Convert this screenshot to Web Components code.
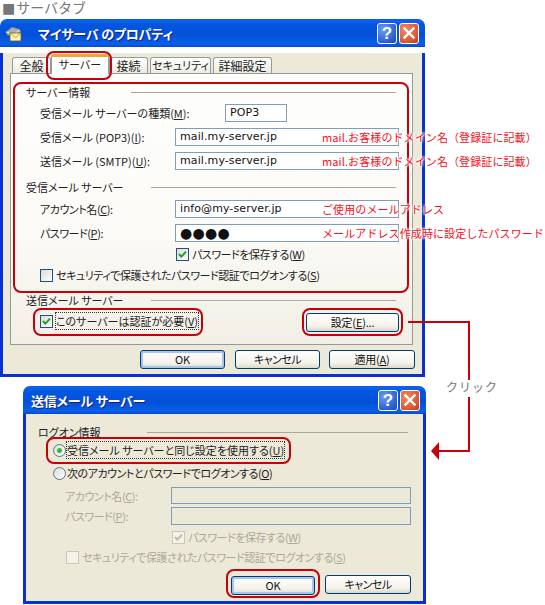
<!DOCTYPE html>
<html lang="ja">
<head>
<meta charset="utf-8">
<title>サーバタブ</title>
<style>
	html, body { margin: 0; background: #fff; }
	body { font: 12px "Noto Sans CJK JP", "Liberation Sans", sans-serif; color: #222; }
</style>
</head>
<body>
<mail-guide></mail-guide>
<script>
'use strict';

const UI_FONT = `"Noto Sans CJK JP", "Noto Sans", sans-serif`;

// small helper, every element here is only markup + style
function register(name, css, html) {
	customElements.define(name, class extends HTMLElement {
		constructor() {
			super();
			const root = this.attachShadow({ mode: 'open' });
			const markup = typeof html === 'function' ? html(this) : html;
			root.innerHTML = `<style>${css}</style>${markup}`;
		}
	});
}

register('xp-button', `
	:host { display: block; box-sizing: border-box; height: 19px; border: 1px solid #003c74; border-radius: 3px;
		background: linear-gradient(#fff, #f4f2ea 70%, #dcd8c8); color: #111; font: 11px ${UI_FONT};
		font-feature-settings: "palt"; line-height: 17px; text-align: center; letter-spacing: -.2px; }
	:host([default]) { box-shadow: inset 0 0 0 2px #a9c4ec; }
`, `<slot></slot>`);

register('xp-field', `
	:host { display: block; box-sizing: border-box; height: 18px; border: 1px solid #7f9db9; background: #fff;
		font: 11px/16px "DejaVu Sans", sans-serif; color: #111; padding-left: 4px; letter-spacing: .1px; white-space: nowrap; overflow: hidden; }
	:host([disabled]) { background: #ece9d8; }
	:host([secret]) { font-size: 14px; letter-spacing: .3px; line-height: 16px; padding-left: 4px; }
`, `<slot></slot>`);

register('xp-check', `
	:host { display: flex; align-items: center; gap: 3px; height: 16px; white-space: nowrap; font-feature-settings: "palt"; }
	:host([disabled]) { color: #aca899; }
	.box { width: 13px; height: 13px; flex: none; box-sizing: border-box; border: 1px solid #1c5180;
		background: linear-gradient(135deg, #dcdcd7, #fff); }
	:host([disabled]) .box { border-color: #cac8bb; background: #f4f2ea; }
	svg { display: block; width: 11px; height: 11px; }
	.focus { outline: 1px dotted #333; outline-offset: 0; }
`, (el) => `
	<span class="box">${el.hasAttribute('checked') ? `<svg viewBox="0 0 11 11"><path d="M2 5l2.4 2.6L9 2.6" fill="none" stroke="${el.hasAttribute('disabled') ? '#bdbaa9' : '#21a121'}" stroke-width="2"/></svg>` : ''}</span>
	<span class="${el.hasAttribute('focused') ? 'focus' : ''}"><slot></slot></span>`);

register('xp-radio', `
	:host { display: flex; align-items: center; gap: 1px; height: 16px; white-space: nowrap; font-feature-settings: "palt"; }
	.dot { width: 13px; height: 13px; flex: none; box-sizing: border-box; border: 1px solid #4f7596; border-radius: 50%;
		background: linear-gradient(135deg, #dcdcd7, #fff); display: flex; align-items: center; justify-content: center; }
	i { width: 5px; height: 5px; border-radius: 50%; background: #3cb83c; }
	.focus { outline: 1px dotted #333; }
`, (el) => `
	<span class="dot">${el.hasAttribute('checked') ? '<i></i>' : ''}</span>
	<span class="${el.hasAttribute('focused') ? 'focus' : ''}"><slot></slot></span>`);

register('group-head', `
	:host { display: flex; align-items: center; gap: var(--gap, 27px); height: 16px; white-space: nowrap; font-feature-settings: "palt"; }
	i { flex: 1; height: 1px; background: #aca899; }
`, `<slot></slot><i></i>`);

register('red-ring', `
	:host { display: block; box-sizing: border-box; border: 2px solid #c8000a; border-radius: 8px; }
`, `<slot></slot>`);

register('red-note', `
	:host { position: absolute; left: 322px; color: #f5101a; font: 11px/14px ${UI_FONT}; white-space: nowrap; letter-spacing: .1px;
		text-shadow: 0 0 2px #fff, 0 0 2px #fff, 0 0 3px #fff, 0 0 3px #fff, 0 0 4px #fff; }
`, `<slot></slot>`);

register('xp-dialog', `
	:host { display: block; box-sizing: border-box; font: 11px ${UI_FONT}; color: #222; }
	.bar { height: 28px; box-sizing: border-box; border-radius: 7px 7px 0 0; display: flex; align-items: center; padding: 0 6px 0 5px;
		background: linear-gradient(#0a5ce6 0, #0b62ee 8%, #0455df 20%, #0351d8 60%, #0a5fea 90%, #0449cc 100%); }
	.title { color: #fff; font-weight: 700; font-size: 13px; flex: 1; white-space: nowrap; font-feature-settings: "palt";
		letter-spacing: -.2px; text-shadow: 1px 1px #0f1f8c; }
	.ctrl { width: 20px; height: 21px; box-sizing: border-box; border: 1px solid #fff; border-radius: 3px; margin-left: 2px;
		display: flex; align-items: center; justify-content: center; color: #fff; font: 700 17px/17px "Liberation Sans", sans-serif; }
	.help { background: radial-gradient(circle at 30% 30%, #6e9cf0, #2a5fd6 70%, #1c49b8); }
	.close { background: radial-gradient(circle at 30% 30%, #ee8a5f, #dc5430 70%, #b83a1c); }
	.close svg { width: 14px; height: 14px; display: block; }
	.body { background: #ece9d8; border: solid #0731d2; border-width: 0 3px 3px; }
	::slotted(svg) { width: 17px; height: 17px; margin: 1px 16px 0 0; flex: none; }
`, `
	<div class="bar">
		<slot name="icon"></slot>
		<span class="title"><slot name="title"></slot></span>
		<span class="ctrl help">?</span>
		<span class="ctrl close"><svg viewBox="0 0 14 14"><path d="M2.5 2.5l9 9M11.5 2.5l-9 9" stroke="#fff" stroke-width="2.4" stroke-linecap="square"/></svg></span>
	</div>
	<div class="body"><slot></slot></div>
`);

const formCss = `
	.row { display: flex; align-items: center; white-space: nowrap; font-feature-settings: "palt"; }
	.label { flex: none; }
	.kana { letter-spacing: -.45px; }
`;

register('server-dialog', `
	:host { display: block; }
	${formCss}
	.tabs { display: flex; align-items: flex-end; height: 20px; margin: 6px 0 0 9px; font: 12px ${UI_FONT}; font-feature-settings: "palt"; }
	.tab { position: relative; height: 16px; box-sizing: border-box; border: 1px solid #919b9c; border-bottom: 0; border-radius: 3px 3px 0 0;
		background: linear-gradient(#fff, #ecebe0); text-align: center; line-height: 15px; white-space: nowrap; }
	.tab.on { height: 20px; background: #fefefd; border-top: 3px solid #f0a53c; line-height: 15px; z-index: 1; margin-bottom: -1px; }
	.tab-ring { position: absolute; left: -6px; right: -4px; top: -6px; bottom: -6px; }
	.panel { box-sizing: border-box; height: 272px; margin: 0 9px 0 7px; border: 1px solid #919b9c; padding-top: 8px;
		background: linear-gradient(#fefefd, #fbfaf6 60%, #f1efe5); }
	.main-ring { margin-left: 2px; width: 396px; height: 211px; }
	.head-a { margin: 0 11px 0 11px; }
	.r { padding-left: 25px; height: 18px; }
	.auth-row { display: flex; margin: 0; }
	.auth-ring { margin-left: 22px; width: 170px; height: 28px; padding: 3px 0 0 5px; }
	.set-ring { margin-left: auto; margin-right: 9px; width: 101px; height: 28px; padding: 3px 2px 0; }
	.actions { display: flex; justify-content: flex-end; gap: 9px; margin: 5px 7px 0 0; height: 24px; }
`, `
	<div class="tabs">
		<div class="tab" style="width:39px">全般</div>
		<div class="tab on" style="width:58px;font-size:11px">サーバー<red-ring class="tab-ring"></red-ring></div>
		<div class="tab" style="width:39px">接続</div>
		<div class="tab" style="width:61px;margin-left:2px;font-size:11px">セキュリティ</div>
		<div class="tab" style="width:59px;margin-left:2px">詳細設定</div>
	</div>
	<div class="panel">
		<red-ring class="main-ring">
			<group-head class="head-a" style="--gap:41px">サーバー情報</group-head>
			<div class="row r" style="margin-top:4px"><span class="label" style="width:185px">受信メール サーバーの種類(<u>M</u>):</span><xp-field style="width:62px">POP3</xp-field></div>
			<div class="row r" style="margin-top:6px"><span class="label" style="width:135px">受信メール (POP3)(<u>I</u>):</span><xp-field style="width:224px">mail.my-server.jp</xp-field></div>
			<div class="row r" style="margin-top:6px"><span class="label" style="width:135px">送信メール (SMTP)(<u>U</u>):</span><xp-field style="width:224px">mail.my-server.jp</xp-field></div>
			<group-head class="head-a" style="margin-top:9px">受信メール サーバー</group-head>
			<div class="row r" style="margin-top:5px"><span class="label kana" style="width:135px">アカウント名(<u>C</u>):</span><xp-field style="width:224px">info@my-server.jp</xp-field></div>
			<div class="row r" style="margin-top:6px"><span class="label kana" style="width:135px">パスワード(<u>P</u>):</span><xp-field secret style="width:224px">●●●●</xp-field></div>
			<xp-check class="kana" checked style="margin:4px 0 0 161px">パスワードを保存する(<u>W</u>)</xp-check>
			<xp-check class="kana" style="margin:5px 0 0 25px">セキュリティで保護されたパスワード認証でログオンする(<u>S</u>)</xp-check>
		</red-ring>
		<group-head style="margin:-1px 16px 0 15px">送信メール サーバー</group-head>
		<div class="auth-row">
			<red-ring class="auth-ring"><xp-check checked focused>このサーバーは認証が必要(<u>V</u>)</xp-check></red-ring>
			<red-ring class="set-ring"><xp-button>設定(<u>E</u>)...</xp-button></red-ring>
		</div>
	</div>
	<div class="actions">
		<xp-button default style="width:85px;margin-right:1px">OK</xp-button>
		<xp-button style="width:85px;letter-spacing:-.5px">キャンセル</xp-button>
		<xp-button style="width:86px">適用(<u>A</u>)</xp-button>
	</div>
`);

register('smtp-dialog', `
	:host { display: block; }
	${formCss}
	.inner { height: 187px; padding-top: 10px; box-sizing: border-box; }
	.use-ring { margin: -3px 0 0 20px; width: 245px; height: 27px; padding: 3px 0 0 5px; }
	.r { margin-left: 39px; color: #aca899; }
	.foot { display: flex; align-items: flex-start; margin: 4px 0 0 200px; }
	.ok-ring { width: 94px; height: 29px; padding: 5px 3px 0; }
`, `
	<div class="inner">
		<group-head style="margin:0 15px 0 12px;--gap:46px">ログオン情報</group-head>
		<red-ring class="use-ring"><xp-radio checked focused>受信メール サーバーと同じ設定を使用する(<u>U</u>)</xp-radio></red-ring>
		<xp-radio class="kana" style="margin:1px 0 0 27px">次のアカウントとパスワードでログオンする(<u>O</u>)</xp-radio>
		<div class="row r" style="margin-top:6px"><span class="label kana" style="width:106px">アカウント名(<u>C</u>):</span><xp-field disabled style="width:240px;height:17px"></xp-field></div>
		<div class="row r" style="margin-top:3px"><span class="label kana" style="width:106px">パスワード(<u>P</u>):</span><xp-field disabled style="width:240px"></xp-field></div>
		<xp-check class="kana" checked disabled style="margin:4px 0 0 146px">パスワードを保存する(<u>W</u>)</xp-check>
		<xp-check class="kana" disabled style="margin:4px 0 0 40px">セキュリティで保護されたパスワード認証でログオンする(<u>S</u>)</xp-check>
		<div class="foot">
			<red-ring class="ok-ring"><xp-button default>OK</xp-button></red-ring>
			<xp-button style="width:86px;margin:6px 0 0 5px;letter-spacing:-.5px">キャンセル</xp-button>
		</div>
	</div>
`);

register('mail-guide', `
	:host { display: block; position: relative; width: 545px; height: 605px; overflow: hidden; background: #fff; }
	.heading { height: 19px; font: 14px/16px "DejaVu Sans", ${UI_FONT}; color: #777; padding-left: 2px; box-sizing: border-box; }
	.heading b { font-weight: 400; letter-spacing: 1px; }
	.first { width: 425px; }
	.second { width: 403px; margin: 9px 0 0 23px; }
	.wire { position: absolute; left: 0; top: 0; width: 545px; height: 605px; pointer-events: none; }
	.click { position: absolute; left: 446px; top: 380px; font: 12px/14px ${UI_FONT}; color: #777; letter-spacing: 1px; }
`, `
	<div class="heading"><b>■</b>サーバタブ</div>
	<xp-dialog class="first">
		<svg slot="icon" viewBox="0 0 17 17">
			<path d="M1 7l6-5 7 2 2 3-6 5-8-2z" fill="#a8aeb4" stroke="#5f6a72" stroke-width=".6"/>
			<path d="M1 7l8 2 6-4" fill="none" stroke="#e4e8ec"/>
			<rect x="5" y="8" width="11" height="8" fill="#fdf3b0" stroke="#6f5a10" stroke-width=".8"/>
			<path d="M5 8l5.5 4.5L16 8" fill="none" stroke="#b09030" stroke-width=".8"/>
		</svg>
		<span slot="title">マイサーバ のプロパティ</span>
		<server-dialog></server-dialog>
	</xp-dialog>
	<xp-dialog class="second">
		<span slot="title" style="margin-left:3px">送信メール サーバー</span>
		<smtp-dialog></smtp-dialog>
	</xp-dialog>
	<red-note style="top:130px">mail.お客様のドメイン名（登録証に記載）</red-note>
	<red-note style="top:154px">mail.お客様のドメイン名（登録証に記載）</red-note>
	<red-note style="top:202px">ご使用のメールアドレス</red-note>
	<red-note style="top:226px">メールアドレス作成時に設定したパスワード</red-note>
	<svg class="wire" viewBox="0 0 545 605">
		<path d="M408 322H469V380M469 397V451H438" fill="none" stroke="#c8000a" stroke-width="2"/>
		<path d="M431 451l8-9v18z" fill="#c8000a"/>
	</svg>
	<span class="click">クリック</span>
`);
</script>
</body>
</html>
